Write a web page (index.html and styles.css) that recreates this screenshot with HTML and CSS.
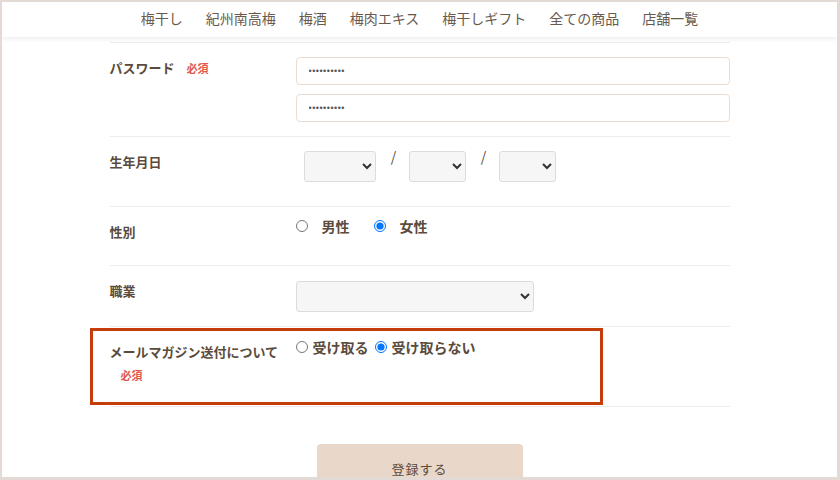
FILE: index.html
```html
<!DOCTYPE html>
<html lang="ja">
<head>
  <meta charset="UTF-8">
  <meta name="viewport" content="width=device-width, initial-scale=1.0">
  <title>会員登録</title>
  <link rel="stylesheet" href="styles.css">
</head>
<body>
  <div class="frame">
    <header class="header">
      <nav class="nav">
        <a href="#">梅干し</a>
        <a href="#">紀州南高梅</a>
        <a href="#">梅酒</a>
        <a href="#">梅肉エキス</a>
        <a href="#">梅干しギフト</a>
        <a href="#">全ての商品</a>
        <a href="#">店舗一覧</a>
      </nav>
    </header>

    <form class="form">
      <div class="row row-password">
        <div class="label">パスワード<span class="req">必須</span></div>
        <div class="field field-stack">
          <input type="password" class="text" value="••••••••••">
          <input type="password" class="text" value="••••••••••">
        </div>
      </div>

      <div class="row row-birth">
        <div class="label">生年月日</div>
        <div class="field field-birth">
          <select class="sel sel-year"><option></option></select>
          <span class="slash">/</span>
          <select class="sel sel-day"><option></option></select>
          <span class="slash">/</span>
          <select class="sel sel-day"><option></option></select>
        </div>
      </div>

      <div class="row row-gender">
        <div class="label">性別</div>
        <div class="field field-radio">
          <label class="radio"><input type="radio" name="sex">男性</label>
          <label class="radio"><input type="radio" name="sex" checked>女性</label>
        </div>
      </div>

      <div class="row row-job">
        <div class="label">職業</div>
        <div class="field">
          <select class="sel sel-job"><option></option></select>
        </div>
      </div>

      <div class="row row-mail">
        <div class="label">メールマガジン送付について<span class="req req-block">必須</span></div>
        <div class="field field-radio tight">
          <label class="radio"><input type="radio" name="mail">受け取る</label>
          <label class="radio"><input type="radio" name="mail" checked>受け取らない</label>
        </div>
      </div>

      <div class="submit">
        <button type="button" class="btn">登録する</button>
      </div>
    </form>
  </div>
</body>
</html>
```

FILE: styles.css
```css
html, body {
  margin: 0;
  padding: 0;
}
body {
  font-family: "Noto Sans CJK JP", "Noto Sans", sans-serif;
  color: #5a4b3c;
  background: #fff;
}
.frame {
  box-sizing: border-box;
  width: 840px;
  height: 480px;
  overflow: hidden;
  border: solid #e4dad5;
  border-width: 2px 3px 3px 2px;
  background: #fff;
}
.header {
  box-sizing: border-box;
  height: 35px;
  padding-bottom: 3px;
  background: #fff;
  box-shadow: 0 2px 5px rgba(0, 0, 0, 0.07);
  display: flex;
  justify-content: center;
  align-items: center;
  position: relative;
}
.nav {
  display: flex;
  gap: 23px;
}
.nav a {
  color: #6a5a4c;
  text-decoration: none;
  font-size: 14px;
}
.form {
  width: 620px;
  margin: 5px auto 0;
  border-top: 1px solid #efebe8;
}
.row {
  display: grid;
  grid-template-columns: 186px 1fr;
  box-sizing: border-box;
  border-bottom: 1px solid #efebe8;
}
.row-password { height: 94px; }
.row-birth { height: 70px; }
.row-gender { height: 59px; }
.row-job { height: 61px; }
.row-mail { height: 80px; position: relative; }
.row-mail::after {
  content: "";
  position: absolute;
  left: -20px;
  top: 1px;
  width: 513px;
  height: 77px;
  box-sizing: border-box;
  border: 3px solid #c43d0b;
}
.label {
  padding-top: 15px;
  font-size: 13px;
  font-weight: bold;
  line-height: 20px;
  color: #5a4b3c;
}
.req {
  color: #e0584c;
  font-size: 11px;
  margin-left: 12px;
}
.req-block {
  display: block;
  margin-left: 11px;
  margin-top: 3px;
}
.field {
  padding-top: 14px;
}
.field-stack {
  display: flex;
  flex-direction: column;
  gap: 9px;
}
.text {
  box-sizing: border-box;
  width: 434px;
  height: 28px;
  border: 1px solid #ecdccf;
  border-radius: 4px;
  padding: 0 12px;
  font-size: 9px;
  color: #555;
  letter-spacing: 0.5px;
  outline: none;
}
.sel {
  box-sizing: border-box;
  height: 31px;
  border: 1px solid #dcdcdc;
  border-radius: 3px;
  background-color: #f6f6f6;
  color: #333;
}
.sel-year { width: 72px; margin-left: 8px; }
.sel-day { width: 57px; }
.sel-job { width: 238px; margin-top: 1px; }
.field-birth {
  display: flex;
  align-items: flex-start;
}
.slash {
  box-sizing: border-box;
  width: 33px;
  padding-left: 3px;
  text-align: center;
  font-size: 14px;
  line-height: 14px;
  margin-top: -2px;
}
.field-radio {
  display: flex;
  align-items: flex-start;
  gap: 24px;
  padding-top: 9px;
}
.radio {
  display: flex;
  align-items: center;
  font-size: 14px;
  line-height: 20px;
  font-weight: bold;
  color: #5a4b3c;
}
.radio input {
  margin: 0 14px 0 0;
  width: 12px;
  height: 12px;
}
.tight {
  gap: 6px;
  padding-top: 10px;
}
.tight .radio input {
  margin-right: 5px;
}
.submit {
  display: flex;
  justify-content: center;
  padding-top: 37px;
}
.btn {
  width: 206px;
  height: 52px;
  border: none;
  border-radius: 4px;
  background: #e9d7c9;
  color: #5a4b3c;
  font-family: "Noto Sans CJK JP", sans-serif;
  font-size: 13px;
  letter-spacing: 1px;
  padding: 0 0 4px;
}
```
